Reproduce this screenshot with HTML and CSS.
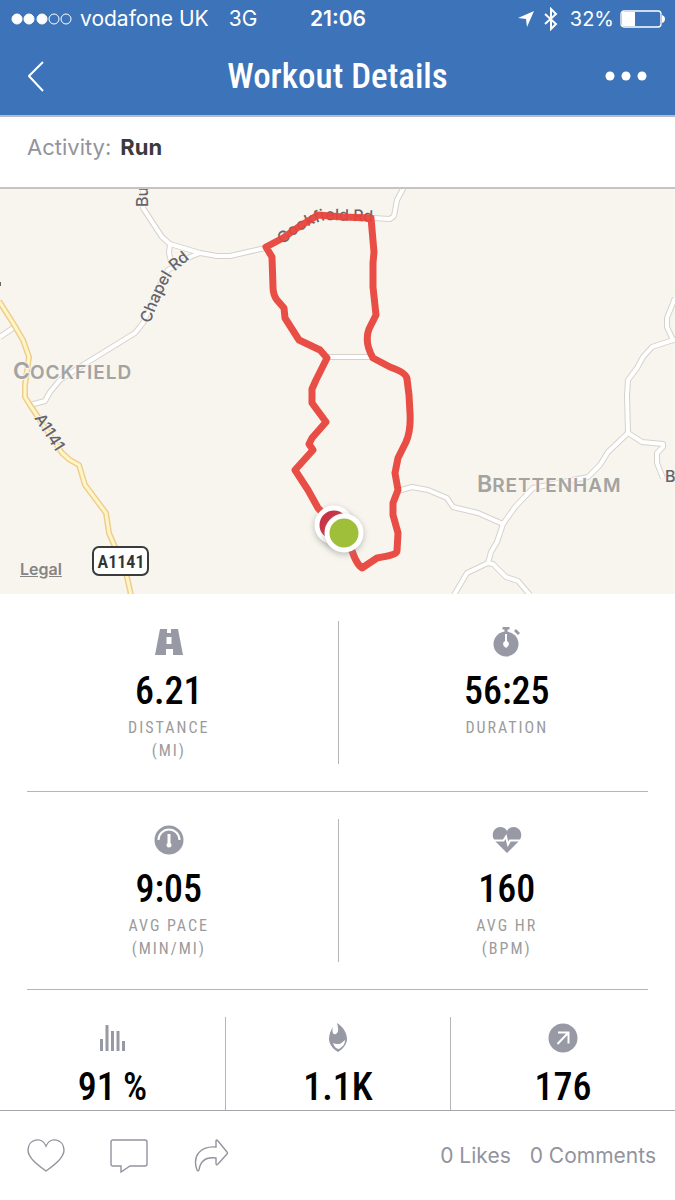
FILE: index.html
```html
<!DOCTYPE html>
<html lang="en">
<head>
    <meta charset="UTF-8">
    <meta name="viewport" content="width=device-width, initial-scale=1.0">
    <title>Workout Details</title>
    <link rel="stylesheet" href="styles.css">
</head>
<body>
<header class="top">
    <div class="status-bar">
        <div class="status-left">
            <svg width="61" height="14" viewBox="0 0 61 14" fill="#fff" stroke="#fff">
                <circle cx="6" cy="7" r="5"/>
                <circle cx="18" cy="7" r="5"/>
                <circle cx="31" cy="7" r="5"/>
                <circle cx="43" cy="7" r="5" fill="none"/>
                <circle cx="55" cy="7" r="5" fill="none"/>
            </svg>
            <span class="carrier">vodafone UK</span>
            <span class="network">3G</span>
        </div>
        <div class="clock">21:06</div>
        <div class="status-right">
            <svg width="16" height="16" viewBox="0 0 16 16" fill="#fff"><path d="M16 0 9 16 8 8 0 7z"/></svg>
            <svg class="bluetooth" width="14" height="24" viewBox="0 0 14 24" fill="none" stroke="#fff" stroke-width="2"><path d="M1 7l11 10-5 5V2l5 5L1 17"/></svg>
            <span class="percent">32%</span>
            <svg width="45" height="18" viewBox="0 0 45 18"><rect x="1" y="1" width="40" height="16" rx="3" fill="none" stroke="#fff" stroke-width="1.3"/><path d="M2 2h13v14H2zM42 5q3 1 3 4t-3 4z" fill="#fff"/></svg>
        </div>
    </div>
    <nav class="nav-bar">
        <button class="icon-btn" type="button" aria-label="Back">
            <svg width="17" height="31" viewBox="0 0 17 31" fill="none" stroke="#fff" stroke-width="2"><path d="M15 1 1 15l14 15"/></svg>
        </button>
        <h1>Workout Details</h1>
        <button class="icon-btn more" type="button" aria-label="More">
            <svg width="42" height="10" viewBox="0 0 42 10" fill="#fff"><circle cx="5" cy="5" r="4.5"/><circle cx="21" cy="5" r="4.5"/><circle cx="37" cy="5" r="4.5"/></svg>
        </button>
    </nav>
</header>

<main>
    <p class="activity">Activity: <strong>Run</strong></p>

    <div class="map">
        <svg class="map-canvas" viewBox="0 0 675 405">
            <defs>
                <path id="label-chapel" d="M150 135 C158 113 166 95 175 82 L199 62"/>
                <path id="label-cockfield" d="M283 56 Q304 36 325 31 L380 33"/>
                <g id="lanes">
                    <path d="M0 148 16 137"/>
                    <path d="M30 216 45 212 50 203 60 191 83 176 135 144 143 134 160 96 168 81 190 68 200 64"/>
                    <path d="M143 -4V19L162 48 170 55 200 64 217 67 230 67 265 59"/>
                    <path d="M170 55 169 64 172 76"/>
                    <path d="M373 29 390 30 394 27 397 11 404 -2"/>
                    <path d="M327 168H373"/>
                    <path d="M398 302 412 298 428 301 447 309 453 318 478 324 503 335"/>
                    <path d="M675 109 667 129V138L673 151 652 158 643 168 637 179 628 191 627 206 628 244 608 263 600 276 588 288 533 299 515 318 503 335 497 353 491 363 488 374 467 384 454 406"/>
                    <path d="M675 152 673 151"/>
                    <path d="M488 374 493 375 506 388 518 392 530 406"/>
                    <path d="M628 244 642 253 663 255 663 258 657 264V274L663 289"/>
                </g>
                <path id="main-road" d="M-1 112 13 134 23 151 29 168 25 196V208L30 216 62 264 70 271 79 276 85 296 106 324 109 344 115 358 127 388 131 406"/>
            </defs>
            <use href="#lanes" class="road-edge"/>
            <use href="#lanes" class="road"/>
            <use href="#main-road" class="main-edge"/>
            <use href="#main-road" class="main-fill"/>

            <g class="road-label">
                <text><textPath href="#label-chapel">Chapel Rd</textPath></text>
                <text><textPath href="#label-cockfield">Cockfield Rd</textPath></text>
                <text transform="translate(148 18) rotate(-90)">Bu</text>
                <text transform="translate(34 229) rotate(57)">A1141</text>
                <text x="665" y="293">B</text>
                <path d="M0 93v4" stroke="#666"/>
            </g>
            <text class="place" x="13" y="190">C<tspan class="small">OCKFIELD</tspan></text>
            <text class="place" x="477" y="303">B<tspan class="small">RETTENHAM</tspan></text>

            <rect x="93" y="358" width="55" height="28" rx="6" fill="#fff" stroke="#3b3b3b" stroke-width="2"/>
            <text class="shield" x="121" y="379">A1141</text>

            <path class="route" d="M334 336 318 319 308 301 295 281 313 261 309 255 312 249 326 233 312 214V200L316 191 327 169 320 161 299 151 285 129 284 119 277 111Q273 106 273 98L272 68 266 58 283 49 297 39 318 26 343 28 371 29 374 63 373 74 373 98 376 126 369 140Q364 153 373 169L390 178Q407 184 407 190L409 206 410 224Q411 242 406 253L398 269 395 284 398 301 393 314V326L398 344 397 362Q397 366 377 369L362 379Q355 374 350 355L344 344"/>
            <circle class="marker" cx="334" cy="336" r="17" fill="#c93344"/>
            <circle class="marker" cx="344" cy="344" r="17" fill="#9fbf3b"/>
        </svg>
        <a class="legal" href="#legal">Legal</a>
    </div>

    <section class="stats">
        <div class="stat-row two">
            <div class="stat">
                <svg class="stat-icon" viewBox="0 0 30 30"><path fill-rule="evenodd" d="M6 2h7v4h4V2h7l5 26H19v-6h-7v6H1zM12.500 10v7h5v-7z"/></svg>
                <div class="value">6.21</div>
                <div class="label">DISTANCE<br>(MI)</div>
            </div>
            <div class="stat">
                <svg class="stat-icon" viewBox="0 0 30 30"><circle cx="14" cy="17" r="12.500"/><path d="M10.500 0h7v2.500h-2V6h-3V2.500h-2zM22 4l2-2 4 4-2 2z"/><path d="M13 7h2v7q2 1 2 3t-3 4q-3-2-3-4t2-3z" fill="#fff"/></svg>
                <div class="value">56:25</div>
                <div class="label">DURATION</div>
            </div>
        </div>
        <hr>
        <div class="stat-row two">
            <div class="stat">
                <svg class="stat-icon" viewBox="0 0 30 30"><circle cx="15" cy="15" r="14.500"/><path d="M4.500 15a10.500 10.500 0 0 1 21 0" fill="none" stroke="#fff" stroke-width="2"/><path d="M13.500 9h3v9q1 1 1 2a2.500 2.500 0 0 1-5 0q0-1 1-2z" fill="#fff"/></svg>
                <div class="value">9:05</div>
                <div class="label">AVG PACE<br>(MIN/MI)</div>
            </div>
            <div class="stat">
                <svg class="stat-icon" viewBox="0 0 30 30"><path d="M15 28 3 16C-2 10 2 2 8 2q5 0 7 4 2-4 7-4c6 0 10 8 5 14z"/><path d="M0 15.500h11.500l2.500-4 2 8 2-4H30" fill="none" stroke="#fff" stroke-width="2"/></svg>
                <div class="value">160</div>
                <div class="label">AVG HR<br>(BPM)</div>
            </div>
        </div>
        <hr>
        <div class="stat-row three">
            <div class="stat">
                <svg class="stat-icon" viewBox="0 0 30 30"><path d="M2 16h3v12H2zM7.500 2h3v26h-3zM13 8h3v20h-3zM18.500 8h3v20h-3zM24 18h3v10h-3z"/></svg>
                <div class="value">91&thinsp;%</div>
            </div>
            <div class="stat">
                <svg class="stat-icon" viewBox="0 0 30 30"><path d="M14 0c5 3 10 9 10 16 0 5-4 10-9 13-5-3-9-8-9-13 0-5 2-9 4-12-2 7 2 9 4 6 2-2 1-6 0-10z"/><path d="M10 20q6 3 12-3c0 5-3 7-6 9-3 0-5-3-6-6z" fill="#fff"/><path d="M10 18q7 7 11-2-2 4-5 3z"/></svg>
                <div class="value">1.1K</div>
            </div>
            <div class="stat">
                <svg class="stat-icon" viewBox="0 0 30 30"><circle cx="15" cy="15" r="14.500"/><path d="M10 9.500h10.500v11M20 10 9.500 21" fill="none" stroke="#fff" stroke-width="2"/></svg>
                <div class="value">176</div>
            </div>
        </div>
    </section>
</main>

<footer class="bottom-bar">
    <div class="actions">
        <button class="icon-btn" type="button" aria-label="Like">
            <svg class="action-icon" viewBox="0 0 38 34"><path d="M19 32C11 26 1 19 1 11 1 0 15-3 19 7 23-3 37 0 37 11 37 19 27 26 19 32z"/></svg>
        </button>
        <button class="icon-btn" type="button" aria-label="Comment">
            <svg class="action-icon" viewBox="0 0 38 34"><path d="M3 1h32q2 0 2 2v22q0 2-2 2H20l-9 6v-6H3q-2 0-2-2V3q0-2 2-2z"/></svg>
        </button>
        <button class="icon-btn" type="button" aria-label="Share">
            <svg class="action-icon" viewBox="0 0 38 34"><path d="M23 2q0-2 2 0l9 11q1 1 0 2l-9 10q-2 2-2-1v-5Q8 17 6 31 5 33 4 31C-1 17 7 7 23 8z"/></svg>
        </button>
    </div>
    <div class="counts">
        <a href="#likes">0 Likes</a>
        <a href="#comments">0 Comments</a>
    </div>
</footer>
</body>
</html>
```
FILE: styles.css
```css
* {
    box-sizing: border-box;
}

body {
    margin: 0;
    min-height: 100vh;
    display: flex;
    flex-direction: column;
    background-color: #fff;
    font-family: Inter, "Liberation Sans", sans-serif;
}

svg {
    display: block;
}

.top {
    background-color: #3d73b9;
    border-bottom: 2px solid #b6bac2;
    color: #fff;
}

.status-bar {
    display: grid;
    grid-template-columns: 1fr auto 1fr;
    align-items: center;
    height: 37px;
    padding: 0 10px 0 11px;
    font-size: 21px;
}

.status-left, .status-right {
    display: flex;
    align-items: center;
}

.carrier {
    margin-left: 8px;
}

.network {
    margin-left: 20px;
}

.clock {
    font-weight: 600;
}

.status-right {
    justify-content: flex-end;
    gap: 6px;
}

.bluetooth {
    margin: 0 6px 0 4px;
}

.percent {
    font-size: 20px;
}

.nav-bar {
    display: grid;
    grid-template-columns: 1fr auto 1fr;
    align-items: center;
    height: 78px;
    padding: 0 28px;
}

h1 {
    margin: 0;
    font-family: "Roboto Condensed", Roboto, sans-serif;
    font-size: 35px;
    font-weight: 500;
}

.icon-btn {
    padding: 0;
    border: none;
    background: none;
    cursor: pointer;
    justify-self: start;
}

.more {
    justify-self: end;
}

.activity {
    display: flex;
    gap: 9px;
    height: 72px;
    margin: 0;
    padding: 15px 27px;
    border-bottom: 2px solid #c5c4c1;
    color: #92939d;
    font-size: 22px;
    line-height: 30px;
}

.activity strong {
    color: #3b3b3d;
}

.map {
    position: relative;
    background-color: #f8f5ee;
}

.map-canvas {
    width: 100%;
    height: auto;
}

.road, .road-edge, .main-edge, .main-fill {
    fill: none;
    stroke-linejoin: round;
}

.road-edge {
    stroke: #d5d2cc;
    stroke-width: 6px;
}

.road {
    stroke: #fff;
    stroke-width: 4px;
}

.main-edge {
    stroke: #efcd8d;
    stroke-width: 6px;
}

.main-fill {
    stroke: #fff6c8;
    stroke-width: 3px;
}

.road-label, .place {
    paint-order: stroke;
    stroke: #f8f5ee;
    stroke-width: 2px;
}

.road-label {
    fill: #64646a;
    font-size: 16px;
    font-weight: 500;
}

.place {
    fill: #a3a3a1;
    font-size: 23px;
    font-weight: 600;
}

.place .small {
    font-size: 19px;
    letter-spacing: 1px;
}

.shield {
    fill: #333;
    font-family: "Roboto Condensed", Roboto, sans-serif;
    font-size: 18px;
    font-weight: 600;
    text-anchor: middle;
}

.route {
    fill: none;
    stroke: #e8453c;
    stroke-width: 7px;
    stroke-linejoin: round;
    stroke-opacity: 0.95;
}

.marker {
    stroke: #fff;
    stroke-width: 5px;
    filter: drop-shadow(0 2px 3px #8888);
}

.legal {
    position: absolute;
    left: 20px;
    bottom: 15px;
    color: #858585;
    font-size: 16px;
    font-weight: 600;
}

main {
    flex: 1;
}

hr {
    margin: 0 27px;
    border: none;
    border-top: 1px solid #b5b5b8;
}

.stat-row {
    display: grid;
    padding: 27px 0;
}

.two {
    grid-template-columns: 1fr 1fr;
}

.three {
    grid-template-columns: 1fr 1fr 1fr;
    padding-bottom: 0;
}

.stat {
    display: flex;
    flex-direction: column;
    align-items: center;
    min-height: 93px;
    padding-top: 6px;
}

.two .stat {
    min-height: 143px;
}

.stat + .stat {
    border-left: 1px solid #b5b5b8;
}

.stat-icon {
    width: 30px;
    height: 30px;
    fill: #9799a5;
}

.value {
    margin-top: 12px;
    color: #000;
    font-family: "Roboto Condensed", Roboto, sans-serif;
    font-size: 38px;
    font-weight: 500;
    line-height: 44px;
}

.label {
    margin-top: 3px;
    color: #9b9b9b;
    font-family: "Roboto Condensed", Roboto, sans-serif;
    font-size: 16px;
    line-height: 23px;
    letter-spacing: 2px;
    text-align: center;
}

.bottom-bar {
    display: flex;
    align-items: center;
    justify-content: space-between;
    height: 90px;
    padding: 0 19px 0 27px;
    border-top: 1px solid #a5a6ac;
    background-color: #fff;
}

.actions {
    display: flex;
    gap: 45px;
}

.action-icon {
    width: 38px;
    height: 34px;
    fill: none;
    stroke: #92949f;
    stroke-width: 1.4;
}

.counts {
    display: flex;
    gap: 19px;
}

.counts a {
    color: #92939d;
    font-size: 21px;
    text-decoration: none;
}
```
